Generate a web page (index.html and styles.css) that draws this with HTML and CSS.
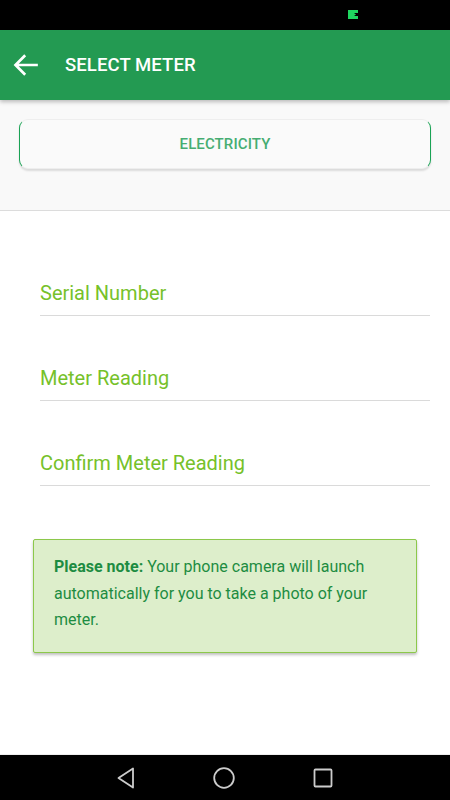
FILE: index.html
```html
<!DOCTYPE html>
<html lang="en">
<head>
  <meta charset="UTF-8" />
  <meta name="viewport" content="width=device-width, initial-scale=1.0"/>
  <title>Select Meter</title>
  <link rel="stylesheet" href="styles.css">
</head>
<body>
  <div class="screen">
    <div class="status-bar">
      <svg class="status-icon" width="11" height="9" viewBox="0 0 11 9">
        <path d="M0 0H10V3H6L8 4.5L6 6H10V9H0Z" fill="#1fd65f"/>
      </svg>
    </div>
    <header class="app-bar">
      <svg class="back" width="28" height="28" viewBox="0 0 24 24">
        <path d="M21 12H3.5M10.5 4.5L3 12L10.5 19.5" fill="none" stroke="#fff" stroke-width="2.3" stroke-linecap="square"/>
      </svg>
      <h1>SELECT METER</h1>
    </header>
    <div class="type-section">
      <button class="type-btn">ELECTRICITY</button>
    </div>
    <div class="form">
      <div class="field">Serial Number</div>
      <div class="field">Meter Reading</div>
      <div class="field">Confirm Meter Reading</div>
    </div>
    <div class="note">
      <b>Please note:</b> Your phone camera will launch automatically for you to take a photo of your meter.
    </div>
    <div class="spacer"></div>
    <nav class="nav-bar">
      <svg width="20" height="24" viewBox="0 0 20 24">
        <path d="M17 2.5V21.5L2.5 12Z" fill="none" stroke="#ccc" stroke-width="1.8" stroke-linejoin="round"/>
      </svg>
      <svg width="24" height="24" viewBox="0 0 24 24">
        <circle cx="12" cy="12" r="9.8" fill="none" stroke="#ccc" stroke-width="1.8"/>
      </svg>
      <svg width="22" height="22" viewBox="0 0 22 22">
        <rect x="2.5" y="2.5" width="17" height="17" rx="1" fill="none" stroke="#ccc" stroke-width="1.8"/>
      </svg>
    </nav>
  </div>
</body>
</html>
```

FILE: styles.css
```css
body {
  margin: 0;
  font-family: Roboto, "Liberation Sans", sans-serif;
  background: #fff;
}
.screen {
  width: 450px;
  height: 800px;
  display: flex;
  flex-direction: column;
  overflow: hidden;
}
.status-bar {
  height: 30px;
  background: #000;
  display: flex;
  align-items: center;
  padding-left: 348px;
  flex-shrink: 0;
}
.status-icon {
  margin-top: -1px;
}
.app-bar {
  height: 70px;
  background: #239a52;
  display: flex;
  align-items: center;
  padding-left: 12px;
  box-shadow: 0 2px 4px rgba(0, 0, 0, 0.25);
  position: relative;
  z-index: 1;
  flex-shrink: 0;
}
.app-bar h1 {
  margin: 0 0 0 25px;
  color: #fff;
  font-size: 18.5px;
  font-weight: 500;
  letter-spacing: 0.1px;
}
.type-section {
  background: #f9f9f9;
  border-bottom: 1px solid #dcdcdc;
  padding: 19px 19px 0;
  box-sizing: border-box;
  height: 111px;
  flex-shrink: 0;
}
.type-btn {
  width: 100%;
  height: 50px;
  background: #fafafa;
  border: 1px solid #eee;
  border-left: 1.5px solid #1aa355;
  border-right: 1.5px solid #1aa355;
  border-radius: 9px;
  box-shadow: 0 2px 2px rgba(0, 0, 0, 0.12);
  font-family: Roboto, "Liberation Sans", sans-serif;
  font-size: 15px;
  font-weight: 500;
  color: #46ad72;
  letter-spacing: 0.1px;
}
.form {
  padding-top: 20px;
}
.field {
  margin: 0 20px 0 40px;
  padding: 50px 0 10px;
  line-height: 24px;
  font-size: 20px;
  color: #76c12a;
  border-bottom: 1px solid #dadada;
}
.note {
  margin: 53px 33px 0;
  padding: 14px 18px 18px 20px;
  background: #ddeecb;
  border: 1px solid #8cc84b;
  border-radius: 2px;
  box-shadow: 0 2px 3px rgba(0, 0, 0, 0.25);
  color: #1d8c42;
  font-size: 16px;
  line-height: 26.5px;
}
.note b {
  font-weight: 700;
}
.spacer {
  flex: 1;
}
.nav-bar {
  height: 45px;
  background: #000;
  border-top: 1px solid #eee;
  display: flex;
  align-items: center;
  justify-content: center;
  gap: 76px;
  flex-shrink: 0;
}
```
